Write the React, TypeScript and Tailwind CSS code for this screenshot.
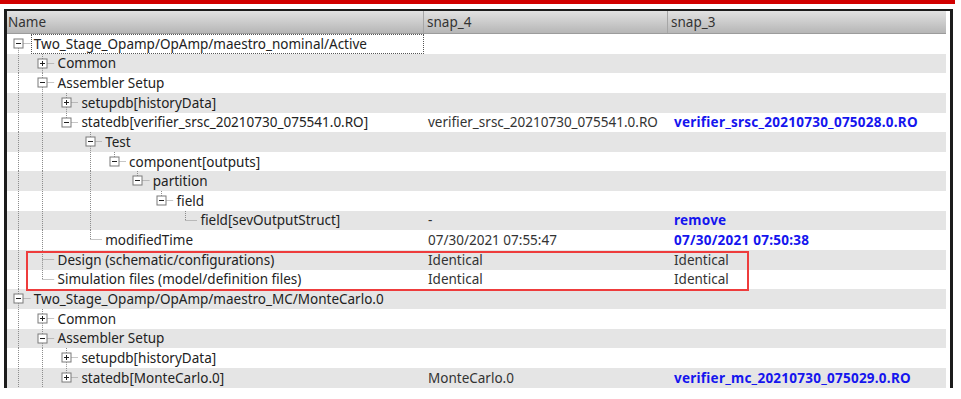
import React from "react";

type Node = {
  d: number;
  label?: string;
  exp?: "+" | "-";
  v4?: string;
  v3?: string;
  blue?: boolean;
  hidden?: boolean;
};

const rows: Node[] = [
  { d: 0, label: "Two_Stage_Opamp/OpAmp/maestro_nominal/Active", exp: "-" },
  { d: 1, label: "Common", exp: "+" },
  { d: 1, label: "Assembler Setup", exp: "-" },
  { d: 2, label: "setupdb[historyData]", exp: "+" },
  {
    d: 2,
    label: "statedb[verifier_srsc_20210730_075541.0.RO]",
    exp: "-",
    v4: "verifier_srsc_20210730_075541.0.RO",
    v3: "verifier_srsc_20210730_075028.0.RO",
    blue: true,
  },
  { d: 3, label: "Test", exp: "-" },
  { d: 4, label: "component[outputs]", exp: "-" },
  { d: 5, label: "partition", exp: "-" },
  { d: 6, label: "field", exp: "-" },
  { d: 7, label: "field[sevOutputStruct]", v4: "-", v3: "remove", blue: true },
  { d: 3, label: "modifiedTime", v4: "07/30/2021 07:55:47", v3: "07/30/2021 07:50:38", blue: true },
  { d: 1, label: "Design (schematic/configurations)", v4: "Identical", v3: "Identical" },
  { d: 1, label: "Simulation files (model/definition files)", v4: "Identical", v3: "Identical" },
  { d: 0, label: "Two_Stage_Opamp/OpAmp/maestro_MC/MonteCarlo.0", exp: "-" },
  { d: 1, label: "Common", exp: "+" },
  { d: 1, label: "Assembler Setup", exp: "-" },
  { d: 2, label: "setupdb[historyData]", exp: "+" },
  {
    d: 2,
    label: "statedb[MonteCarlo.0]",
    exp: "+",
    v4: "MonteCarlo.0",
    v3: "verifier_mc_20210730_075029.0.RO",
    blue: true,
  },
  // the tree goes on below the visible area
  { d: 1, hidden: true },
  { d: 0, hidden: true },
];

const COL = 23.8;
const ROW_H = 19.65;
const LINE = "#8c8c8c";

// does the node at index i have a later sibling at the same depth
const hasNext = (i: number) => {
  const d = rows[i].d;
  for (let j = i + 1; j < rows.length; j++) {
    if (rows[j].d < d) return false;
    if (rows[j].d === d) return true;
  }
  return false;
};

// for depth k, the ancestor of row i at that depth
const ancestorHasNext = (i: number, k: number) => {
  for (let j = i; j >= 0; j--) {
    if (rows[j].d === k) return hasNext(j);
  }
  return false;
};

const Branches: React.FC<{ i: number }> = ({ i }) => {
  const n = rows[i];
  const w = (n.d + 1) * COL;
  const cy = ROW_H / 2;
  const cx = (k: number) => Math.floor(k * COL + COL / 2) + 0.5;
  const parts: React.ReactNode[] = [];

  for (let k = 0; k < n.d; k++) {
    if (ancestorHasNext(i, k)) {
      parts.push(
        <line key={"a" + k} x1={cx(k)} y1={0} x2={cx(k)} y2={ROW_H} stroke={LINE} strokeDasharray="1 1" />
      );
    }
  }

  const x = cx(n.d);
  if (i !== 0) {
    parts.push(<line key="up" x1={x} y1={0} x2={x} y2={cy} stroke={LINE} strokeDasharray="1 1" />);
  }
  if (hasNext(i)) {
    parts.push(<line key="down" x1={x} y1={cy} x2={x} y2={ROW_H} stroke={LINE} strokeDasharray="1 1" />);
  }
  parts.push(
    <line key="h" x1={x} y1={Math.floor(cy) + 0.5} x2={w} y2={Math.floor(cy) + 0.5} stroke={LINE} strokeDasharray="1 1" />
  );

  if (n.exp) {
    const bx = x - 4.5;
    const by = Math.floor(cy) - 4;
    parts.push(
      <g key="box">
        <rect x={bx} y={by} width={9} height={9} fill="#fff" stroke="#7a7a7a" />
        <line x1={bx + 2} y1={by + 4.5} x2={bx + 7} y2={by + 4.5} stroke="#222" />
        {n.exp === "+" && <line x1={bx + 4.5} y1={by + 2} x2={bx + 4.5} y2={by + 7} stroke="#222" />}
      </g>
    );
  }

  return (
    <svg width={w} height={ROW_H} className="shrink-0 block">
      {parts}
    </svg>
  );
};

export default function App() {
  return (
    <div className="relative w-[961px] h-[399px] bg-white overflow-hidden font-['Noto_Sans',sans-serif] text-[13.5px] text-[#222]">
      <div className="h-[4px] w-[955px] bg-[#d20000]" />

      <div className="mt-[5px] ml-[4px] w-[949px] h-[379px] flex border-t-2 border-l-[3px] border-r-[3px] border-[#1c1c1c] overflow-hidden">
        <div className="w-[939px] flex flex-col">
          <div className="flex h-[23px] shrink-0 bg-gradient-to-b from-[#e2e2e2] to-[#b6b6b6] border-b border-[#9c9c9c] text-[#333]">
            <div className="w-[417px] pl-[1px] flex items-center border-r border-[#a6a6a6]">Name</div>
            <div className="w-[244px] pl-[3px] flex items-center border-r border-[#a6a6a6]">snap_4</div>
            <div className="flex-1 pl-[3px] flex items-center">snap_3</div>
          </div>

          {rows.map((n, i) =>
            n.hidden ? null : (
              <div
                key={i}
                className={`flex h-[19.65px] shrink-0 ${i % 2 === 1 ? "bg-[#e5e5e5]" : "bg-white"}`}
              >
                <div className="w-[417px] shrink-0 flex">
                  <Branches i={i} />
                  <div
                    className={`flex-1 flex items-center pl-[2px] whitespace-nowrap border ${
                      i === 0 ? "border-dotted border-[#555] bg-white" : "border-transparent"
                    }`}
                  >
                    {n.label}
                  </div>
                </div>
                <div className="w-[244px] shrink-0 pl-[4px] flex items-center whitespace-nowrap text-[#333]">
                  {n.v4}
                </div>
                <div
                  className={`flex-1 pl-[6px] flex items-center whitespace-nowrap ${
                    n.blue ? "font-bold tracking-[0.25px] text-[#1515ee]" : "text-[#333]"
                  }`}
                >
                  {n.v3}
                </div>
              </div>
            )
          )}
        </div>
      </div>

      <div className="absolute left-[26px] top-[251px] w-[723px] h-[40px] border-2 border-[#ee3c3c]" />
    </div>
  );
}
